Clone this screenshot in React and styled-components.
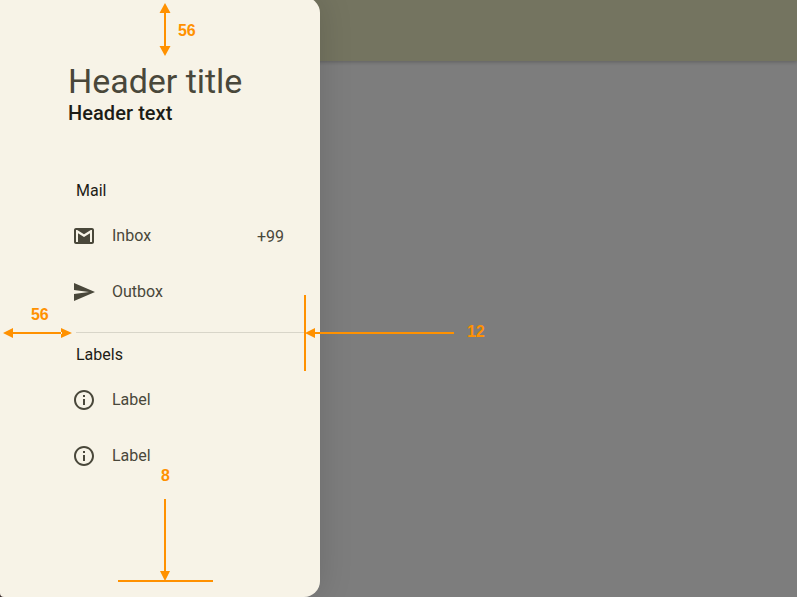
import React from "react";
import styled, { createGlobalStyle } from "styled-components";

const Global = createGlobalStyle`
  * { box-sizing: border-box; }
  body { margin: 0; overflow: hidden; font-family: Roboto, sans-serif; }
`;

const Screen = styled.main`
  position: relative;
  width: 797px;
  height: 597px;
  overflow: hidden;
  display: grid;
  grid-template-columns: 320px 1fr;
  background: linear-gradient(90deg, #3a2c2c 8px, #7d7d7d 8px);
`;

const Drawer = styled.aside`
  position: relative;
  z-index: 1;
  display: flex;
  flex-direction: column;
  height: 600px;
  margin-top: -3px;
  padding: 64px 16px 0 68px;
  background: #f7f3e7;
  border-radius: 0 16px 16px 4px;
  box-shadow: 0 0 34px rgba(0, 0, 0, 0.14);
`;

const Backdrop = styled.section`
  min-width: 0;
  margin-left: -20px;
  background: #7d7d7d;
`;

const AppBar = styled.header`
  height: 61px;
  background: #747460;
  box-shadow: 0 1px 4px rgba(0, 0, 0, 0.24);
`;

const Title = styled.h1`
  margin: 0;
  font-size: 34px;
  line-height: 40px;
  font-weight: 400;
  letter-spacing: -0.04px;
  color: #49473a;
`;

const Subtitle = styled.h2`
  margin: 0;
  font-size: 20px;
  line-height: 24px;
  font-weight: 500;
  letter-spacing: 0.06px;
  color: #1d1c16;
`;

const Nav = styled.nav`
  margin-top: 44px;
`;

const SectionTitle = styled.h3`
  margin: 0 0 0 8px;
  height: 39px;
  padding-top: 10px;
  font-size: 16px;
  line-height: 24px;
  font-weight: 400;
  color: #1d1c16;
`;

const Item = styled.a`
  display: flex;
  align-items: center;
  height: 56px;
  padding: 0 20px 0 4px;
  font-size: 16px;
  line-height: 24px;
  color: #49473a;
`;

const ItemIcon = styled.svg`
  width: 24px;
  height: 24px;
  margin-right: 16px;
  fill: #49473a;
`;

const Badge = styled.span`
  margin-left: auto;
  padding-top: 2px;
`;

const Divider = styled.hr`
  width: 228px;
  height: 1px;
  margin: 12px 0 0 8px;
  border: 0;
  background: #d8d5c9;
`;

const Annotations = styled.svg`
  position: absolute;
  z-index: 2;
  inset: 0;
  fill: #ff9100;
`;

const Measure = styled.span`
  position: absolute;
  z-index: 3;
  left: ${(p) => p.$x}px;
  top: ${(p) => p.$y}px;
  font-family: "Liberation Sans", Arial, sans-serif;
  font-size: 16px;
  line-height: 20px;
  font-weight: 700;
  letter-spacing: -0.2px;
  color: #ff9100;
`;

const paths = {
  mail: "M20 4H4c-1.100 0-2 .900-2 2v12c0 1.100.900 2 2 2h16c1.100 0 2-.900 2-2V6c0-1.100-.900-2-2-2zm0 14h-2V9.250L12 13 6 9.250V18H4V6h1.200l6.800 4.250L18.800 6H20v12z",
  send: "M2.010 21 23 12 2.010 3 2 10l15 2-15 2z",
  info: "M11 7h2v2h-2zm0 4h2v6h-2zm1-9C6.480 2 2 6.480 2 12s4.480 10 10 10 10-4.480 10-10S17.520 2 12 2zm0 18c-4.410 0-8-3.590-8-8s3.590-8 8-8 8 3.590 8 8-3.590 8-8 8z",
};

function NavItem({ icon, label, count }) {
  return (
    <Item>
      <ItemIcon viewBox="0 0 24 24"><path d={paths[icon]} /></ItemIcon>
      {label}
      {count && <Badge>{count}</Badge>}
    </Item>
  );
}

export default function App() {
  return (
    <>
      <Global />
      <Screen>
        <Drawer>
          <Title>Header title</Title>
          <Subtitle>Header text</Subtitle>
          <Nav>
            <SectionTitle>Mail</SectionTitle>
            <NavItem icon="mail" label="Inbox" count="+99" />
            <NavItem icon="send" label="Outbox" />
            <Divider />
            <SectionTitle>Labels</SectionTitle>
            <NavItem icon="info" label="Label" />
            <NavItem icon="info" label="Label" />
          </Nav>
        </Drawer>
        <Backdrop>
          <AppBar />
        </Backdrop>
        <Annotations width="797" height="597" viewBox="0 0 797 597">
          <path d="M164 12h2v35h-2zM165 3l5.500 10h-11zM159.500 46h11L165 56z" />
          <path d="M12 332h50v2H12zM3 333l10-5v10zM61 328v10l11-5z" />
          <path d="M304 295h2v76h-2zM314 332h140v2H314zM305 333l10-5v10z" />
          <path d="M164 499h2v73h-2zM160 571h10l-5 10zM118 580h95v2h-95z" />
        </Annotations>
        <Measure $x={178} $y={21}>56</Measure>
        <Measure $x={31} $y={305}>56</Measure>
        <Measure $x={467} $y={322}>12</Measure>
        <Measure $x={161} $y={466}>8</Measure>
      </Screen>
    </>
  );
}
